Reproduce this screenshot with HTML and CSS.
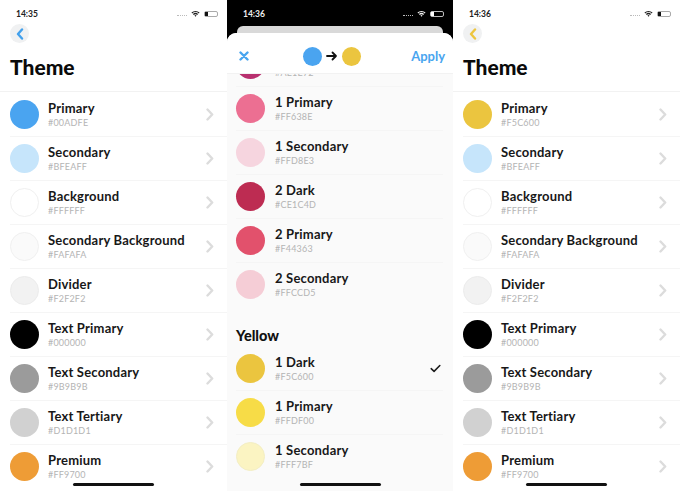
FILE: index.html
```html
<!DOCTYPE html>
<html lang="en">
<head>
  <meta charset="UTF-8">
  <meta name="viewport" content="width=device-width, initial-scale=1.0">
  <title>Theme</title>
  <link rel="stylesheet" href="styles.css">
</head>
<body>
  <svg class="sprites" width="0" height="0" aria-hidden="true">
    <symbol id="wifi" viewBox="0 0 12 9">
      <path d="M.6 3.2a7.8 7.8 0 0 1 10.8 0L10.3 4.4a6.2 6.2 0 0 0-8.6 0zM2.6 5.2a5 5 0 0 1 6.8 0L8.3 6.4a3.4 3.4 0 0 0-4.6 0zM4.6 7.2a2.1 2.1 0 0 1 2.8 0L6 8.7z"/>
    </symbol>
    <symbol id="chevron" viewBox="0 0 8 13">
      <path d="M1.5 1.5 6.2 6.5l-4.7 5" fill="none" stroke="currentColor" stroke-width="2.4" stroke-linecap="round" stroke-linejoin="round"/>
    </symbol>
    <symbol id="back" viewBox="0 0 8 12">
      <path d="M6 1.5 2 6l4 4.5" fill="none" stroke="currentColor" stroke-width="2.4" stroke-linecap="round" stroke-linejoin="round"/>
    </symbol>
  </svg>

  <main class="screens">
    <!-- left: blue theme -->
    <section class="phone">
      <div class="status">
        <span class="time">14:35</span>
        <span class="signal">
          <i class="dots"></i>
          <svg class="wifi"><use href="#wifi"/></svg>
          <i class="battery"></i>
        </span>
      </div>
      <button class="back back-blue"><svg><use href="#back"/></svg></button>
      <h1 class="title">Theme</h1>
      <ul class="rows rows-theme">
        <li class="row"><i class="dot c-blue"></i><div class="info"><b>Primary</b><small>#00ADFE</small></div><svg class="chev"><use href="#chevron"/></svg></li>
        <li class="row"><i class="dot c-sky"></i><div class="info"><b>Secondary</b><small>#BFEAFF</small></div><svg class="chev"><use href="#chevron"/></svg></li>
        <li class="row"><i class="dot c-white"></i><div class="info"><b>Background</b><small>#FFFFFF</small></div><svg class="chev"><use href="#chevron"/></svg></li>
        <li class="row"><i class="dot c-snow"></i><div class="info"><b>Secondary Background</b><small>#FAFAFA</small></div><svg class="chev"><use href="#chevron"/></svg></li>
        <li class="row"><i class="dot c-line"></i><div class="info"><b>Divider</b><small>#F2F2F2</small></div><svg class="chev"><use href="#chevron"/></svg></li>
        <li class="row"><i class="dot c-black"></i><div class="info"><b>Text Primary</b><small>#000000</small></div><svg class="chev"><use href="#chevron"/></svg></li>
        <li class="row"><i class="dot c-gray"></i><div class="info"><b>Text Secondary</b><small>#9B9B9B</small></div><svg class="chev"><use href="#chevron"/></svg></li>
        <li class="row"><i class="dot c-silver"></i><div class="info"><b>Text Tertiary</b><small>#D1D1D1</small></div><svg class="chev"><use href="#chevron"/></svg></li>
        <li class="row"><i class="dot c-orange"></i><div class="info"><b>Premium</b><small>#FF9700</small></div><svg class="chev"><use href="#chevron"/></svg></li>
      </ul>
      <i class="home"></i>
    </section>

    <!-- middle: colour picker sheet -->
    <section class="phone phone-dark">
      <div class="status status-dark">
        <span class="time">14:36</span>
        <span class="signal">
          <i class="dots"></i>
          <svg class="wifi"><use href="#wifi"/></svg>
          <i class="battery"></i>
        </span>
      </div>
      <div class="sheet-behind"></div>
      <div class="sheet">
        <div class="sheet-head">
          <button class="close">
            <svg viewBox="0 0 10 10"><path d="M1.5 1.5l7 7M8.5 1.5l-7 7"/></svg>
          </button>
          <div class="swap">
            <i class="dot-small c-blue"></i>
            <svg class="arrow" viewBox="0 0 12 10"><path d="M1 5h9M6.5 1.5 10 5 6.5 8.5"/></svg>
            <i class="dot-small c-yellow"></i>
          </div>
          <span class="apply">Apply</span>
        </div>
        <div class="picker">
          <ul class="rows rows-picker">
            <li class="row"><i class="dot c-magenta"></i><div class="info"><b>&nbsp;</b><small>#AE1E72</small></div></li>
            <li class="row"><i class="dot c-pink"></i><div class="info"><b>1 Primary</b><small>#FF638E</small></div></li>
            <li class="row"><i class="dot c-blush"></i><div class="info"><b>1 Secondary</b><small>#FFD8E3</small></div></li>
            <li class="row"><i class="dot c-crimson"></i><div class="info"><b>2 Dark</b><small>#CE1C4D</small></div></li>
            <li class="row"><i class="dot c-red"></i><div class="info"><b>2 Primary</b><small>#F44363</small></div></li>
            <li class="row"><i class="dot c-rose"></i><div class="info"><b>2 Secondary</b><small>#FFCCD5</small></div></li>
          </ul>
          <h2 class="group">Yellow</h2>
          <ul class="rows rows-picker">
            <li class="row"><i class="dot c-yellow"></i><div class="info"><b>1 Dark</b><small>#F5C600</small></div>
              <svg class="check" viewBox="0 0 12 10"><path d="M1.2 5.2 4.4 8.2 10.8 1.6"/></svg></li>
            <li class="row"><i class="dot c-lemon"></i><div class="info"><b>1 Primary</b><small>#FFDF00</small></div></li>
            <li class="row"><i class="dot c-cream"></i><div class="info"><b>1 Secondary</b><small>#FFF7BF</small></div></li>
          </ul>
        </div>
      </div>
      <i class="home"></i>
    </section>

    <!-- right: yellow theme -->
    <section class="phone">
      <div class="status">
        <span class="time">14:36</span>
        <span class="signal">
          <i class="dots"></i>
          <svg class="wifi"><use href="#wifi"/></svg>
          <i class="battery"></i>
        </span>
      </div>
      <button class="back back-yellow"><svg><use href="#back"/></svg></button>
      <h1 class="title">Theme</h1>
      <ul class="rows rows-theme">
        <li class="row"><i class="dot c-yellow"></i><div class="info"><b>Primary</b><small>#F5C600</small></div><svg class="chev"><use href="#chevron"/></svg></li>
        <li class="row"><i class="dot c-sky"></i><div class="info"><b>Secondary</b><small>#BFEAFF</small></div><svg class="chev"><use href="#chevron"/></svg></li>
        <li class="row"><i class="dot c-white"></i><div class="info"><b>Background</b><small>#FFFFFF</small></div><svg class="chev"><use href="#chevron"/></svg></li>
        <li class="row"><i class="dot c-snow"></i><div class="info"><b>Secondary Background</b><small>#FAFAFA</small></div><svg class="chev"><use href="#chevron"/></svg></li>
        <li class="row"><i class="dot c-line"></i><div class="info"><b>Divider</b><small>#F2F2F2</small></div><svg class="chev"><use href="#chevron"/></svg></li>
        <li class="row"><i class="dot c-black"></i><div class="info"><b>Text Primary</b><small>#000000</small></div><svg class="chev"><use href="#chevron"/></svg></li>
        <li class="row"><i class="dot c-gray"></i><div class="info"><b>Text Secondary</b><small>#9B9B9B</small></div><svg class="chev"><use href="#chevron"/></svg></li>
        <li class="row"><i class="dot c-silver"></i><div class="info"><b>Text Tertiary</b><small>#D1D1D1</small></div><svg class="chev"><use href="#chevron"/></svg></li>
        <li class="row"><i class="dot c-orange"></i><div class="info"><b>Premium</b><small>#FF9700</small></div><svg class="chev"><use href="#chevron"/></svg></li>
      </ul>
      <i class="home"></i>
    </section>
  </main>
</body>
</html>
```

FILE: styles.css
```css
/* Reset */
* {
  margin: 0;
  padding: 0;
  box-sizing: border-box;
}
body {
  width: 680px;
  height: 491px;
  overflow: hidden;
  background: #fff;
  color: #111;
  font-family: Lato, "Open Sans", sans-serif;
}
.sprites {
  display: block;
}
ul {
  list-style: none;
}
button {
  border: none;
  background: none;
}

/* Three screens side by side */
.screens {
  display: grid;
  grid-template-columns: 227px 226px 227px;
  height: 491px;
}
.phone {
  position: relative;
  height: 491px;
  overflow: hidden;
  background: #fff;
}
.phone-dark {
  background: #000;
}

/* Status bar */
.status {
  display: flex;
  justify-content: space-between;
  align-items: center;
  height: 26px;
  padding: 1px 9px 0 16px;
  font-size: 8.5px;
  font-weight: 700;
  color: #222;
}
.status-dark {
  color: #eee;
}
.signal {
  display: flex;
  align-items: center;
  gap: 4px;
}
.dots {
  width: 10px;
  height: 1px;
  margin-top: 4px;
  border-top: 1px dotted #bbb;
}
.wifi {
  width: 9px;
  height: 7px;
  fill: currentColor;
}
.battery {
  position: relative;
  width: 14px;
  height: 6px;
  border: 1px solid #aaa;
  border-radius: 2px;
}
.battery::before {
  content: "";
  display: block;
  width: 3px;
  height: 4px;
  background: #111;
}
.status-dark .battery {
  border-color: #bbb;
}
.status-dark .battery::before {
  background: #fff;
}

/* Page heading */
.back {
  display: flex;
  align-items: center;
  justify-content: center;
  width: 19px;
  height: 19px;
  margin: -2px 0 0 10px;
  border-radius: 50%;
  background: #f0f1f2;
}
.back svg {
  width: 8px;
  height: 12px;
}
.back-blue {
  color: #42a0ec;
}
.back-yellow {
  color: #edc53f;
}
.title {
  margin: 10px 0 0 10px;
  height: 38px;
  font-size: 21px;
  line-height: 28px;
  font-weight: 900;
  color: #0a0a0a;
}

/* Rows */
.rows-theme {
  border-top: 1px solid #f2f2f2;
}
.row {
  display: flex;
  align-items: center;
  gap: 9px;
  height: 44px;
  margin-left: 10px;
  padding-right: 13px;
  position: relative;
}
.rows-theme .row + .row::before,
.rows-picker .row + .row::before {
  content: "";
  position: absolute;
  left: 0;
  right: 0;
  top: 0;
  border-top: 1px solid #f5f5f5;
}
.dot {
  flex: none;
  width: 29px;
  height: 29px;
  border-radius: 50%;
}
.info {
  flex: 1;
  min-width: 0;
  display: flex;
  flex-direction: column;
  padding-top: 1px;
}
.info b {
  font-size: 13px;
  line-height: 16px;
  font-weight: 700;
  letter-spacing: 0.2px;
  color: #181818;
  white-space: nowrap;
}
.info small {
  margin-top: 1px;
  font-size: 9px;
  line-height: 12px;
  color: #b4b4b4;
  letter-spacing: 0.2px;
}
.chev {
  flex: none;
  width: 8px;
  height: 13px;
  color: #dcdcdc;
}

/* Swatch colours */
.c-blue { background: #4aa4f0; }
.c-sky { background: #c6e5fb; }
.c-white { background: #fff; border: 1px solid #f0f0f0; }
.c-snow { background: #fafafa; border: 1px solid #f0f0f0; }
.c-line { background: #f2f2f2; border: 1px solid #ececec; }
.c-black { background: #000; }
.c-gray { background: #9b9b9b; }
.c-silver { background: #d1d1d1; }
.c-orange { background: #ee9c36; }
.c-yellow { background: #ebc53f; }
.c-magenta { background: #b8306f; }
.c-pink { background: #ec6f92; }
.c-blush { background: #f6d5df; }
.c-crimson { background: #bd2c52; }
.c-red { background: #e2516c; }
.c-rose { background: #f5cdd6; }
.c-lemon { background: #f7dc47; }
.c-cream { background: #fbf4c2; border: 1px solid #f3eec4; }

/* Bottom sheet */
.sheet-behind {
  height: 14px;
  margin: 0 10px -7px;
  border-radius: 6px 6px 0 0;
  background: #d9d9d9;
}
.sheet {
  height: 458px;
  border-radius: 9px 9px 0 0;
  background: #fafafa;
  overflow: hidden;
}
.sheet-head {
  display: flex;
  align-items: center;
  justify-content: space-between;
  height: 41px;
  padding: 0 8px 0 9px;
  background: #fff;
  border-bottom: 1px solid #f2f2f2;
  position: relative;
  z-index: 1;
}
.close {
  display: flex;
  align-items: center;
  justify-content: center;
  width: 16px;
  height: 16px;
  margin-top: 5px;
}
.close svg {
  width: 10px;
  height: 10px;
  fill: none;
  stroke: #49a5ef;
  stroke-width: 2.4;
  stroke-linecap: round;
}
.swap {
  display: flex;
  align-items: center;
  gap: 4px;
  margin-top: 6px;
}
.dot-small {
  width: 19px;
  height: 19px;
  border-radius: 50%;
}
.arrow {
  width: 12px;
  height: 10px;
  fill: none;
  stroke: #111;
  stroke-width: 1.8;
  stroke-linecap: round;
  stroke-linejoin: round;
}
.apply {
  margin-top: 5px;
  font-size: 13px;
  font-weight: 700;
  color: #49a5ef;
}
.picker {
  margin-top: -32px;
}
.picker .row {
  gap: 10px;
  margin-left: 9px;
  margin-right: 10px;
  padding-right: 2px;
}
.group {
  height: 40px;
  padding: 21px 0 0 9px;
  font-size: 14.5px;
  line-height: 18px;
  font-weight: 900;
  color: #111;
}
.check {
  flex: none;
  width: 11px;
  height: 9px;
  fill: none;
  stroke: #1a1a1a;
  stroke-width: 1.7;
  stroke-linecap: round;
  stroke-linejoin: round;
}

/* Home indicator sits over the list */
.home {
  position: absolute;
  left: 73px;
  bottom: 5px;
  width: 81px;
  height: 3px;
  border-radius: 2px;
  background: #111;
}
```
